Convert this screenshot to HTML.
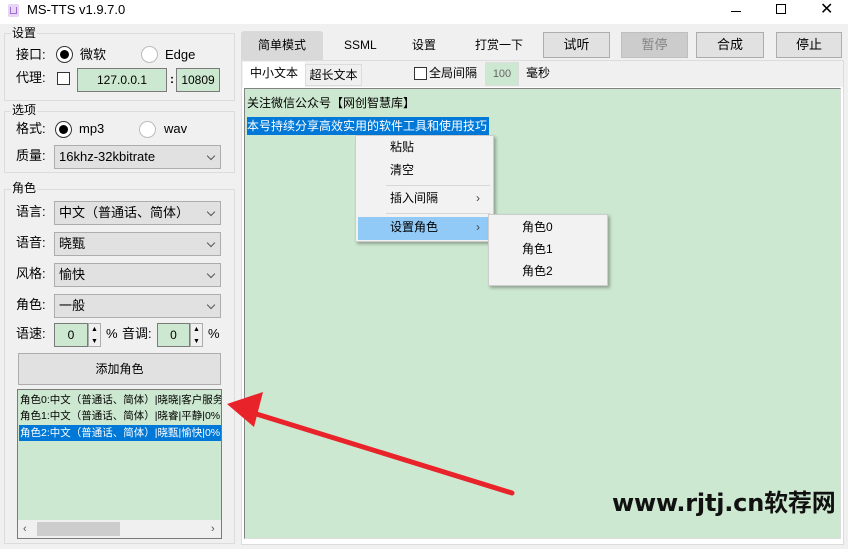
<!DOCTYPE html>
<html><head><meta charset="utf-8"><style>
*{box-sizing:border-box;margin:0;padding:0}
body{width:848px;height:549px;background:#f0f0f0;font-family:"Liberation Sans","Noto Sans CJK SC",sans-serif;font-size:12px;line-height:16px;color:#000;position:relative;overflow:hidden}
.a{position:absolute;white-space:nowrap}
.grp{position:absolute;border:1px solid #dcdcdc}
.gl{position:absolute;background:#f0f0f0;padding:0 1px;font-size:12px;line-height:14px}
.rad{position:absolute;width:17px;height:17px;border:1px solid #333;border-radius:50%;background:#fff}
.rad.on::after{content:"";position:absolute;left:3px;top:3px;width:9px;height:9px;border-radius:50%;background:#000}
.rad.off{border-color:#bbb}
.chk{position:absolute;width:13px;height:13px;border:1px solid #333;background:#fff}
.tb{position:absolute;background:#cde8d0;border:1px solid #7a7a7a;text-align:center;font-size:12px}
.cb{position:absolute;background:#e1e1e1;border:1px solid #adadad;font-size:13px;padding-left:4px}
.cb::after{content:"";position:absolute;right:6px;top:7px;width:5px;height:5px;border-right:1px solid #555;border-bottom:1px solid #555;transform:rotate(45deg)}
.btn{position:absolute;background:#e1e1e1;border:1px solid #adadad;text-align:center;font-size:13px}
.spin{position:absolute;width:13px;border:1px solid #adadad;background:#f0f0f0}
.mi{position:absolute;font-size:12px}
</style></head><body>
<!-- title bar -->
<div class="a" style="left:0;top:0;width:848px;height:24px;background:#fff"></div>
<div class="a" style="left:8px;top:4px;width:11px;height:13px;background:#e8d4f5;border-radius:2px"></div>
<div class="a" style="left:10px;top:7px;width:7px;height:7px;border:1px solid #a070d0;border-top:none"></div>
<div class="a" style="left:27px;top:2px;font-size:13px">MS-TTS v1.9.7.0</div>
<div class="a" style="left:731px;top:11px;width:10px;height:1px;background:#000"></div>
<div class="a" style="left:776px;top:4px;width:10px;height:10px;border:1px solid #000"></div>
<div class="a" style="left:820px;top:1px;font-size:16px;font-family:'DejaVu Sans'">✕</div>

<!-- 设置 -->
<div class="grp" style="left:4px;top:33px;width:231px;height:68px"></div>
<div class="gl" style="left:11px;top:26px">设置</div>
<div class="a" style="left:16px;top:47px;font-size:13px">接口:</div>
<div class="rad on" style="left:56px;top:46px"></div>
<div class="a" style="left:80px;top:47px;font-size:13px">微软</div>
<div class="rad off" style="left:141px;top:46px"></div>
<div class="a" style="left:165px;top:47px;font-size:13px">Edge</div>
<div class="a" style="left:16px;top:70px;font-size:13px">代理:</div>
<div class="chk" style="left:57px;top:72px"></div>
<div class="tb" style="left:77px;top:68px;width:90px;height:24px;line-height:22px">127.0.0.1</div>
<div class="a" style="left:170px;top:71px;font-weight:bold">:</div>
<div class="tb" style="left:176px;top:68px;width:44px;height:24px;line-height:22px">10809</div>

<!-- 选项 -->
<div class="grp" style="left:4px;top:111px;width:231px;height:62px"></div>
<div class="gl" style="left:11px;top:103px">选项</div>
<div class="a" style="left:16px;top:121px;font-size:13px">格式:</div>
<div class="rad on" style="left:55px;top:121px"></div>
<div class="a" style="left:79px;top:121px;font-size:13px">mp3</div>
<div class="rad off" style="left:139px;top:121px"></div>
<div class="a" style="left:164px;top:121px;font-size:13px">wav</div>
<div class="a" style="left:16px;top:148px;font-size:13px">质量:</div>
<div class="cb" style="left:54px;top:145px;width:167px;height:24px;line-height:22px">16khz-32kbitrate</div>

<!-- 角色 -->
<div class="grp" style="left:4px;top:189px;width:231px;height:355px"></div>
<div class="gl" style="left:11px;top:181px">角色</div>
<div class="a" style="left:16px;top:204px;font-size:13px">语言:</div>
<div class="cb" style="left:54px;top:201px;width:167px;height:24px;line-height:22px">中文（普通话、简体）</div>
<div class="a" style="left:16px;top:235px;font-size:13px">语音:</div>
<div class="cb" style="left:54px;top:232px;width:167px;height:24px;line-height:22px">晓甄</div>
<div class="a" style="left:16px;top:266px;font-size:13px">风格:</div>
<div class="cb" style="left:54px;top:263px;width:167px;height:24px;line-height:22px">愉快</div>
<div class="a" style="left:16px;top:297px;font-size:13px">角色:</div>
<div class="cb" style="left:54px;top:294px;width:167px;height:24px;line-height:22px">一般</div>
<div class="a" style="left:16px;top:326px;font-size:13px">语速:</div>
<div class="tb" style="left:54px;top:323px;width:34px;height:24px;line-height:22px">0</div>
<div class="spin" style="left:88px;top:323px;height:24px"></div>
<div class="a" style="left:91px;top:322px;font-size:7px">▲</div><div class="a" style="left:91px;top:334px;font-size:7px">▼</div>
<div class="a" style="left:106px;top:326px;font-size:13px">%</div>
<div class="a" style="left:122px;top:326px;font-size:13px">音调:</div>
<div class="tb" style="left:157px;top:323px;width:33px;height:24px;line-height:22px">0</div>
<div class="spin" style="left:190px;top:323px;height:24px"></div>
<div class="a" style="left:193px;top:322px;font-size:7px">▲</div><div class="a" style="left:193px;top:334px;font-size:7px">▼</div>
<div class="a" style="left:208px;top:326px;font-size:13px">%</div>
<div class="btn" style="left:18px;top:353px;width:203px;height:32px;line-height:30px;font-size:12px">添加角色</div>
<div class="a" style="left:17px;top:389px;width:205px;height:150px;background:#cde8d0;border:1px solid #7a7a7a;overflow:hidden">
 <div class="a" style="left:2px;top:2px;font-size:10.5px;line-height:16px">角色0:中文（普通话、简体）|晓晓|客户服务|0</div>
 <div class="a" style="left:2px;top:18px;font-size:10.5px;line-height:16px">角色1:中文（普通话、简体）|晓睿|平静|0%|0</div>
 <div class="a" style="left:1px;top:35px;width:202px;height:16px;background:#0078d7;color:#fff;font-size:10.5px;line-height:16px;padding-left:1px">角色2:中文（普通话、简体）|晓甄|愉快|0%|0</div>
 <div class="a" style="left:0;top:130px;width:203px;height:18px;background:#f0f0f0"></div>
 <div class="a" style="left:19px;top:132px;width:83px;height:14px;background:#cdcdcd"></div>
 <div class="a" style="left:5px;top:131px;font-size:11px;color:#555">‹</div>
 <div class="a" style="left:193px;top:131px;font-size:11px;color:#555">›</div>
</div>

<!-- right tabs -->
<div class="a" style="left:241px;top:31px;width:82px;height:30px;background:#d9d9d9;border-radius:3px 3px 0 0;text-align:center;line-height:28px">简单模式</div>
<div class="a" style="left:344px;top:37px">SSML</div>
<div class="a" style="left:412px;top:37px">设置</div>
<div class="a" style="left:475px;top:37px">打赏一下</div>
<div class="btn" style="left:543px;top:32px;width:67px;height:26px;line-height:24px">试听</div>
<div class="btn" style="left:621px;top:32px;width:67px;height:26px;line-height:24px;background:#cccccc;border-color:#bfbfbf;color:#838383">暂停</div>
<div class="btn" style="left:696px;top:32px;width:68px;height:26px;line-height:24px">合成</div>
<div class="btn" style="left:776px;top:32px;width:66px;height:26px;line-height:24px">停止</div>

<div class="a" style="left:241px;top:60px;width:603px;height:485px;background:#fff;border:1px solid #dcdcdc"></div>
<div class="a" style="left:242px;top:61px;width:601px;height:26px;background:#f0f0f0"></div>
<div class="a" style="left:243px;top:62px;width:62px;height:26px;background:#fff;text-align:center;line-height:22px">中小文本</div>
<div class="a" style="left:305px;top:64px;width:57px;height:22px;border:1px solid #dcdcdc;text-align:center;line-height:20px">超长文本</div>
<div class="chk" style="left:414px;top:67px"></div>
<div class="a" style="left:429px;top:65px">全局间隔</div>
<div class="a" style="left:485px;top:62px;width:34px;height:24px;background:#cde8d0;border:1px solid #dcdcdc;text-align:center;line-height:22px;font-size:11px;color:#666">100</div>
<div class="a" style="left:526px;top:65px">毫秒</div>

<div class="a" style="left:244px;top:88px;width:597px;height:451px;background:#cde8d0;border:1px solid #828282;border-right-color:#ddd;border-bottom-color:#ddd"></div>
<div class="a" style="left:247px;top:95px">关注微信公众号【网创智慧库】</div>
<div class="a" style="left:247px;top:117px;width:242px;height:18px;background:#0078d7;color:#fff;line-height:18px">本号持续分享高效实用的软件工具和使用技巧</div>

<!-- context menu -->
<div class="a" style="left:355px;top:135px;width:139px;height:107px;background:#f2f2f2;border:1px solid #ccc;box-shadow:2px 2px 3px rgba(0,0,0,.3)"></div>
<div class="mi a" style="left:390px;top:139px">粘贴</div>
<div class="mi a" style="left:390px;top:162px">清空</div>
<div class="a" style="left:386px;top:185px;width:104px;height:1px;background:#d7d7d7"></div>
<div class="mi a" style="left:390px;top:190px">插入间隔</div>
<div class="a" style="left:476px;top:190px;color:#444">›</div>
<div class="a" style="left:386px;top:213px;width:104px;height:1px;background:#d7d7d7"></div>
<div class="a" style="left:358px;top:217px;width:134px;height:23px;background:#91c9f7"></div>
<div class="mi a" style="left:390px;top:219px">设置角色</div>
<div class="a" style="left:476px;top:219px;color:#444">›</div>
<div class="a" style="left:488px;top:214px;width:120px;height:72px;background:#f2f2f2;border:1px solid #ccc;box-shadow:2px 2px 3px rgba(0,0,0,.3)"></div>
<div class="mi a" style="left:522px;top:219px">角色0</div>
<div class="mi a" style="left:522px;top:241px">角色1</div>
<div class="mi a" style="left:522px;top:263px">角色2</div>

<!-- red arrow -->
<svg class="a" style="left:0;top:0" width="848" height="549"><line x1="512" y1="493" x2="250" y2="412" stroke="#e8232a" stroke-width="5" stroke-linecap="round"/><polygon points="227,404 263,392 254,427" fill="#e8232a"/></svg>

<div class="a" style="left:612px;top:488px;font-size:24px;line-height:30px;font-weight:bold;font-family:'DejaVu Sans','Noto Sans CJK SC',sans-serif;letter-spacing:-0.2px;color:#111">www.rjtj.cn软荐网</div>
</body></html>
